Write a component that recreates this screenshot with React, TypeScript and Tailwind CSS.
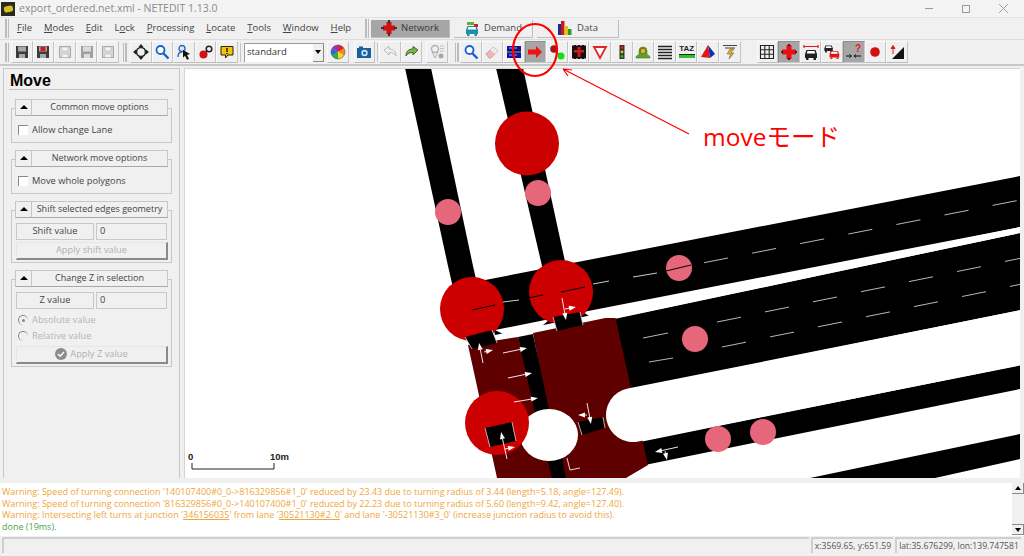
import React from "react";

const ui = "font-['Open_Sans','Noto_Sans',sans-serif]";

const Svg = ({ children }: { children: React.ReactNode }) => (
  <svg viewBox="0 0 16 16" className="w-4 h-4 shrink-0">{children}</svg>
);

const Floppy = ({ body = "#3b3b3b", inner = "#a8a8a8", dot }: { body?: string; inner?: string; dot?: string }) => (
  <Svg>
    <path d="M2 2h12v12H2z" fill={body} />
    <path d="M4 2.500h8v5H4z" fill={inner} />
    <path d="M5 10h6v4H5z" fill={inner} />
    {dot && <path d="M5.500 3h5v4h-5z" fill={dot} />}
  </Svg>
);

const GhostFloppy = () => (
  <Svg>
    <path d="M2.500 2.500h11v11h-11z" fill="#d8d8d8" stroke="#a5a5a5" />
    <path d="M5 3h6v4H5zM5 10h6v3.500H5z" fill="#f4f4f4" stroke="#b5b5b5" strokeWidth="0.6" />
  </Svg>
);

const MoveCross = () => (
  <Svg>
    <circle cx="8" cy="8" r="4.500" fill="none" stroke="#222" strokeWidth="1.600" />
    <path d="M8 0l2.500 3h-5zM8 16l2.500-3h-5zM0 8l3-2.500v5zM16 8l-3-2.500v5z" fill="#222" />
  </Svg>
);

const Search = () => (
  <Svg>
    <circle cx="6.500" cy="6" r="4" fill="#fff" stroke="#1560d4" strokeWidth="1.800" />
    <path d="M9.500 9.500l5 5" stroke="#1560d4" strokeWidth="2.400" />
  </Svg>
);

const LocatePerson = () => (
  <Svg>
    <circle cx="6" cy="4.500" r="3" fill="#dbe7fb" stroke="#2a62c4" strokeWidth="1.300" />
    <path d="M2 13c0-4 2-5 4-5" fill="none" stroke="#2a62c4" strokeWidth="1.400" />
    <path d="M7 6l7 4-3 1 2 4-2 .8-2-4-2 2z" fill="#111" />
  </Svg>
);

const RedLock = () => (
  <Svg>
    <circle cx="5.500" cy="10.500" r="4" fill="#d50f14" />
    <circle cx="11" cy="5" r="2.800" fill="none" stroke="#222" strokeWidth="1.500" />
    <path d="M8 8l1.500-1.500" stroke="#222" strokeWidth="1.500" />
  </Svg>
);

const Bubble = () => (
  <Svg>
    <path d="M2 2.500h12v8.500H9l-2.500 3V11H2z" fill="#f5c400" stroke="#222" />
    <path d="M8 4v4M8 9v1.200" stroke="#222" strokeWidth="1.500" />
  </Svg>
);

const Wheel = () => (
  <Svg>
    <path d="M8 8V1a7 7 0 0 1 6 3.500z" fill="#e3202a" />
    <path d="M8 8l6-3.500A7 7 0 0 1 14 11.500z" fill="#f08a16" />
    <path d="M8 8l6 3.500A7 7 0 0 1 8 15z" fill="#f3dc16" />
    <path d="M8 8v7a7 7 0 0 1-6-3.500z" fill="#2fae3a" />
    <path d="M8 8l-6 3.500A7 7 0 0 1 2 4.500z" fill="#1f68d8" />
    <path d="M8 8L2 4.500A7 7 0 0 1 8 1z" fill="#9a30b8" />
    <circle cx="8" cy="8" r="7" fill="none" stroke="#555" strokeWidth="0.600" />
  </Svg>
);

const Camera = () => (
  <Svg>
    <path d="M1 4h14v10H1z" fill="#17609e" />
    <path d="M3 2.500h4V4H3z" fill="#17609e" />
    <circle cx="8.500" cy="9" r="3.200" fill="#cfe3f5" />
    <circle cx="8.500" cy="9" r="1.600" fill="#17609e" />
  </Svg>
);

const Undo = () => (
  <Svg>
    <path d="M2 6l5-3.500V5c5 0 7 3 7 7-1.500-2.500-3.500-3.500-7-3.500V11z" fill="#f2f2f2" stroke="#b8b8b8" />
  </Svg>
);

const Redo = () => (
  <Svg>
    <path d="M14 6L9 2.500V5c-5 0-7 3-7 7 1.500-2.500 3.500-3.500 7-3.500V11z" fill="#7cb648" stroke="#3e6b24" />
  </Svg>
);

const PinGhost = () => (
  <Svg>
    <circle cx="6" cy="5" r="3.500" fill="none" stroke="#b0b0b0" strokeWidth="1.400" />
    <path d="M3 8l3 6 3-6" fill="none" stroke="#b0b0b0" />
    <circle cx="12" cy="12" r="2.500" fill="#a8a8a8" />
    <path d="M11 2h4M11 4.500h4M11 7h4" stroke="#c0c0c0" />
  </Svg>
);

const Eraser = () => (
  <Svg>
    <path d="M2 10l7-7 5 4-7 7H5z" fill="#f1b5b5" stroke="#c9a6a6" />
    <path d="M9 3l5 4-3 3-5-4z" fill="#ececec" stroke="#c9c9c9" strokeWidth="0.600" />
  </Svg>
);

const Inspect = () => (
  <Svg>
    <path d="M1 2h14v12H1z" fill="#10109a" />
    <path d="M1 6.500h14v1.500H1z" fill="#111" />
    <path d="M3 4h3M8 4h3M3 11h3M8 11h3" stroke="#7fb0ff" />
    <path d="M0 8h16" stroke="#ddd" strokeWidth="0.700" />
  </Svg>
);

const RedArrow = () => (
  <Svg>
    <path d="M1 5.500h8V2l6 6-6 6v-3.500H1z" fill="#f01010" />
  </Svg>
);

const Dots = () => (
  <Svg>
    <circle cx="5" cy="5" r="3.800" fill="#a01818" />
    <path d="M7 7l3 3" stroke="#555" />
    <circle cx="12" cy="12" r="3.500" fill="#15e015" />
  </Svg>
);

const Crossing = () => (
  <Svg>
    <path d="M1 1h14v14H1z" fill="#111" />
    <path d="M6.500 3h3v10h-3zM3 6h10v2.500H3z" fill="#d81818" />
    <path d="M1 1h2M5 1h2M9 1h2M13 1h2M1 15h2M5 15h2M9 15h2M13 15h2" stroke="#eee" />
  </Svg>
);

const Yield = () => (
  <Svg>
    <path d="M2 3h12L8 14z" fill="#fff" stroke="#e0242c" strokeWidth="1.800" />
  </Svg>
);

const TrafficLight = () => (
  <Svg>
    <path d="M5.500 1h5v14h-5z" fill="#333" />
    <circle cx="8" cy="3.500" r="1.400" fill="#e41c1c" />
    <circle cx="8" cy="8" r="1.400" fill="#f0c000" />
    <circle cx="8" cy="12.500" r="1.400" fill="#20c020" />
  </Svg>
);

const Detector = () => (
  <Svg>
    <path d="M1 14c0-2 1-3 3-3V7a4 4 0 0 1 8 0v4c2 0 3 1 3 3z" fill="#5ea32b" stroke="#3d7a1c" strokeWidth="0.600" />
    <circle cx="8" cy="7" r="2.800" fill="#d9b93a" stroke="#7a6a18" />
  </Svg>
);

const Lines = () => (
  <Svg>
    <path d="M1 2.500h14M1 5.500h14M1 8.500h14M1 11.500h14M1 14.500h14" stroke="#222" strokeWidth="1.500" />
  </Svg>
);

const Taz = () => (
  <div className="w-4 h-4 flex flex-col items-center shrink-0">
    <span className="font-['Liberation_Sans',sans-serif] text-[8px] leading-[10px] font-bold text-[#222]">TAZ</span>
    <div className="w-full h-[4px] bg-[#2fc02f] border-t border-[#222]" />
  </div>
);

const Prism = () => (
  <Svg>
    <path d="M8 1L1 13l9 1z" fill="#e01818" />
    <path d="M8 1l2 13 5-4z" fill="#1030a8" />
  </Svg>
);

const Bolt = () => (
  <Svg>
    <path d="M1 1.500h14M3 4h10" stroke="#444" strokeWidth="1.200" />
    <path d="M8 5h4l-3 4h3l-5 6 1.500-5H5z" fill="#e0b010" stroke="#555" strokeWidth="0.500" />
  </Svg>
);

const Grid = () => (
  <Svg>
    <path d="M1.500 1.500h13v13h-13zM1.500 5.800h13M1.500 10.200h13M5.800 1.500v13M10.200 1.500v13" fill="none" stroke="#222" strokeWidth="1.100" />
  </Svg>
);

const RedPlus = () => (
  <Svg>
    <path d="M5.500 1h5v4.500H15v5h-4.500V15h-5v-4.500H1v-5h4.500z" fill="#ea0f14" />
    <path d="M8 0v2M8 14v2M0 8h2M14 8h2" stroke="#111" strokeWidth="1.600" />
  </Svg>
);

const Car = ({ color = "#222", x = 0, y = 0, s = 1 }: { color?: string; x?: number; y?: number; s?: number }) => (
  <g transform={`translate(${x} ${y}) scale(${s})`}>
    <path d="M2 9l1.500-4h9L14 9v4H2z" fill={color} />
    <path d="M4.500 6h7l.8 2.500h-8.600z" fill="#fff" />
    <path d="M3 13h2.500v2H3zM10.500 13H13v2h-2.500z" fill={color} />
  </g>
);

const CarWidth = () => (
  <Svg>
    <path d="M1 2.500h14M1 1v3M15 1v3" stroke="#e01818" strokeWidth="1.200" />
    <Car y={1} />
  </Svg>
);

const TwoCars = () => (
  <Svg>
    <Car x={-1} y={-2} s={0.7} />
    <Car x={4} y={3} s={0.8} color="#e01818" />
  </Svg>
);

const Question = () => (
  <Svg>
    <path d="M0 12h5M3.500 10.500L5.500 12l-2 1.500M8 12h7M10 10.500L8 12l2 1.500" fill="none" stroke="#111" />
    <text x="9" y="8" fontSize="10" fontWeight="700" fill="#e01818" fontFamily="Liberation Sans, sans-serif">?</text>
  </Svg>
);

const RedDot = () => (
  <Svg>
    <circle cx="8" cy="8" r="4.800" fill="#d40f14" />
  </Svg>
);

const Slope = () => (
  <Svg>
    <path d="M15 3v12H3z" fill="#111" />
    <path d="M4 10V3M2 4.500L4 1.500l2 3z" fill="#e01818" stroke="#e01818" />
  </Svg>
);

const Btn = ({ children, on }: { children: React.ReactNode; on?: boolean }) => (
  <div
    className={`w-[21.6px] h-[22px] flex items-center justify-center shrink-0 border-t border-l border-r border-b ${
      on
        ? "bg-[#a6a6a6] border-t-[#909090] border-l-[#909090] border-r-[#c8c8c8] border-b-[#c8c8c8]"
        : "border-t-[#fafafa] border-l-[#fafafa] border-r-[#c4c4c4] border-b-[#bdbdbd]"
    }`}
  >
    {children}
  </div>
);

const Grip = () => (
  <div className="flex gap-[1px] h-[19px] shrink-0">
    <div className="w-[1.500px] bg-[#bcbcbc]" />
    <div className="w-[1.500px] bg-[#bcbcbc]" />
  </div>
);

const Sep = () => <div className="w-[1px] h-[19px] bg-[#c4c4c4] shrink-0" />;

const menus: [string, string, string][] = [
  ["", "F", "ile"],
  ["", "M", "odes"],
  ["", "E", "dit"],
  ["L", "o", "ck"],
  ["", "P", "rocessing"],
  ["", "L", "ocate"],
  ["", "T", "ools"],
  ["", "W", "indow"],
  ["", "H", "elp"],
];

const Tab = ({ children, on, className }: { children: React.ReactNode; on?: boolean; className: string }) => (
  <div
    className={`h-[18px] flex items-center justify-center gap-[4px] text-[9.500px] border-r border-b ${className} ${
      on ? "bg-[#a6a6a6] border-[#bcbcbc] text-[#3a3a3a]" : "border-[#bcbcbc] text-[#4a4a4a]"
    }`}
  >
    {children}
  </div>
);

const Group = ({ title, children, first }: { title: string; children: React.ReactNode; first?: boolean }) => (
  <div className={`mx-[7px] ${first ? "mt-[8.500px]" : "mt-[7px]"}`}>
    <div className="relative z-10 flex h-[17px] mx-[4px]">
      <div className="w-[17px] flex items-center justify-center bg-[#f0f0f0] border border-[#c6c6c6] border-b-[#a8a8a8]">
        <div className="w-0 h-0 border-l-[4px] border-r-[4px] border-b-[4px] border-l-transparent border-r-transparent border-b-black" />
      </div>
      <div className="w-[136px] flex items-center justify-center bg-[#f0f0f0] border border-l-0 border-[#c6c6c6] border-b-[#a8a8a8] text-[#444] text-[9px] whitespace-nowrap">
        {title}
      </div>
    </div>
    <div className="-mt-[8px] border border-[#c8c8c8] pt-[11px] px-[4px] pb-[2px]">{children}</div>
  </div>
);

const Check = ({ label }: { label: string }) => (
  <div className="flex items-center gap-[4px] h-[20px] pl-[2px] text-[9.300px] text-[#444]">
    <div className="w-[10px] h-[10px] bg-white border-t border-l border-[#8a8a8a]" />
    {label}
  </div>
);

const ValueRow = ({ label, value }: { label: string; value: string }) => (
  <div className="flex gap-[2px] h-[17px] text-[9.300px] text-[#444] mt-[1px]">
    <div className="w-[78px] flex items-center justify-center border border-[#c8c8c8]">{label}</div>
    <div className="w-[71px] flex items-center pl-[3px] border border-[#c8c8c8]">{value}</div>
  </div>
);

const Apply = ({ children }: { children: React.ReactNode }) => (
  <div className="w-[152px] h-[18px] mt-[2px] flex items-center justify-center gap-[3px] text-[9.300px] text-[#b0b0b0] border-t border-l border-[#e6e6e6] border-r-2 border-b-2 border-r-[#8a8a8a] border-b-[#8a8a8a]">
    {children}
  </div>
);

const Radio = ({ label, on }: { label: string; on?: boolean }) => (
  <div className="flex items-center gap-[4px] h-[16px] pl-[2px] text-[9.300px] text-[#b4b4b4]">
    <div className="w-[10px] h-[10px] rounded-full border-t border-l border-[#8a8a8a] flex items-center justify-center">
      {on && <div className="w-[3px] h-[3px] rounded-full bg-[#888]" />}
    </div>
    {label}
  </div>
);

const Flow = ({ x1, y1, x2, y2 }: { x1: number; y1: number; x2: number; y2: number }) => {
  const a = Math.atan2(y2 - y1, x2 - x1);
  const l = 7;
  const w = 2.5;
  const bx = x2 - Math.cos(a) * l;
  const by = y2 - Math.sin(a) * l;
  const px = -Math.sin(a) * w;
  const py = Math.cos(a) * w;
  return (
    <g>
      <line x1={x1} y1={y1} x2={bx} y2={by} stroke="#fff" strokeWidth="0.900" />
      <polygon points={`${x2},${y2} ${bx + px},${by + py} ${bx - px},${by - py}`} fill="#fff" />
    </g>
  );
};

const dashes = (x: number, y: number, dx: number, dy: number, n: number) =>
  Array.from({ length: n }, (_, i) => [x + dx * i, y + dy * i] as const);

const laneA = dashes(704, 262.700, 48.100, -9.550, 7);
const laneB1 = dashes(717, 322, 48, -10.100, 7);
const laneB2 = dashes(722, 347, 48, -10.100, 7);

const flows = [
  [483, 363, 479, 343],
  [484, 352, 493, 350],
  [503, 353, 527, 348],
  [508, 378, 532, 373],
  [514, 402, 538, 398],
  [562, 298, 566, 320],
  [565, 309, 576, 307],
  [507, 459, 501, 432],
  [505, 449, 515, 447],
  [587, 403, 591, 424],
  [587, 415, 578, 415],
  [678, 447, 655, 452],
  [665, 451, 667, 460],
];

const stops = [
  "465,337 492,330 497,343 472,349",
  "553,317 580,312 583,325 557,331",
  "485,428 512,422 516,441 490,447",
  "578,422 603,417 605,428 582,435",
];

const Net = () => (
  <svg viewBox="185 69 835 409" className="absolute inset-0 w-full h-full">
    <polygon points="405,68 431,68 473,266 490,340 465,340 448,266" fill="#000" />
    <polygon points="496,68 523,68 566,266 578,320 553,320 542,266" fill="#000" />
    <polygon points="1020,176 480,281 495,335 1020,227" fill="#000" />
    <polygon points="600,322 1020,233 1020,310 612,393" fill="#000" />
    <polygon points="625,445 1020,365 1020,389 630,468" fill="#000" />
    <polygon points="810,478 1020,434 1020,459 935,478" fill="#000" />
    <polygon points="468,345 518,337 555,478 497,478" fill="#5e0000" />
    <polygon points="533,333 615,316 648,465 626,478 560,478" fill="#5e0000" />
    <polygon points="518,337 533,334 549,410 535,413" fill="#000" />
    <polygon points="546,455 561,452 566,478 552,478" fill="#000" />
    <line x1="633" y1="415" x2="1060" y2="330" stroke="#fff" strokeWidth="54" strokeLinecap="round" />
    <polygon points="1020,227 1020,233 617,318 600,318 589,316 583,312" fill="#fff" />
    <path d="M495 330L550 319Q530 338 512 336Q503 335 495 330Z" fill="#fff" />
    <ellipse cx="549" cy="435" rx="29" ry="26" fill="#fff" />
    <circle cx="527" cy="143.500" r="32" fill="#cc0000" />
    <circle cx="472" cy="309" r="32" fill="#cc0000" />
    <circle cx="561" cy="292" r="32" fill="#cc0000" />
    <circle cx="497" cy="423" r="32" fill="#cc0000" />
    {stops.map((p) => (
      <polygon key={p} points={p} fill="#000" />
    ))}
    <path d="M465 337L472 349M492 330L497 343M553 317L557 331M580 312L583 325M485 428L490 447M512 422L516 441M578 422L582 435M603 417L605 428" stroke="#d8d8d8" strokeWidth="0.800" />
    {[[448, 212], [538, 193], [679, 268], [695, 339], [718, 439], [763, 432]].map(([cx, cy]) => (
      <circle key={cx} cx={cx} cy={cy} r="13" fill="#e6677a" />
    ))}
    <path d="M472 310L495 305M528 298L543 295M561 292L585 287M666 271L691 265" stroke="#000" strokeWidth="1" />
    <path d="M503 302L519 300M593 284L609 281M633 277L657 273" stroke="#ccc" strokeWidth="1" />
    {laneA.map(([x, y]) => (
      <line key={x} x1={x} y1={y} x2={x + 24} y2={y - 4.700} stroke="#ccc" strokeWidth="0.900" />
    ))}
    <path d="M643 338L668 333M649 362L673 358" stroke="#ccc" strokeWidth="0.900" />
    {laneB1.map(([x, y]) => (
      <line key={x} x1={x} y1={y} x2={x + 24} y2={y - 4.800} stroke="#ccc" strokeWidth="0.900" />
    ))}
    {laneB2.map(([x, y]) => (
      <line key={x} x1={x} y1={y} x2={x + 24} y2={y - 4.800} stroke="#ccc" strokeWidth="0.900" />
    ))}
    {flows.map(([x1, y1, x2, y2]) => (
      <Flow key={`${x1}-${y1}`} x1={x1} y1={y1} x2={x2} y2={y2} />
    ))}
    <path d="M567 458L570 470L580 468" fill="none" stroke="#eee" strokeWidth="0.900" />
    <path d="M192 463V469H274V463" fill="none" stroke="#222" strokeWidth="1" />
    <text x="188" y="460" fontSize="9.500" fontWeight="700" fill="#222" fontFamily="Liberation Sans, sans-serif">0</text>
    <text x="270" y="460" fontSize="9.500" fontWeight="700" fill="#222" fontFamily="Liberation Sans, sans-serif">10m</text>
  </svg>
);

export default function App() {
  return (
    <div className={`relative w-[1024px] h-[556px] overflow-hidden flex flex-col bg-[#f0f0f0] ${ui}`}>
      {/* title bar */}
      <div className="h-[18px] flex items-center bg-[#f3f3f3] border-b border-[#e2e2e2] shrink-0">
        <div className="w-[14px] h-[14px] ml-[1px] bg-[#2a2a20] flex items-center justify-center">
          <div className="w-[9px] h-[6px] rounded-[2px] bg-[#d8c020] -rotate-12" />
        </div>
        <span className="ml-[4px] text-[10.500px] text-[#8a8a8a]">export_ordered.net.xml - NETEDIT 1.13.0</span>
        <div className="ml-auto flex items-center">
          <div className="w-[8px] h-[1px] bg-[#9a9a9a] mr-[29px]" />
          <div className="w-[8px] h-[8px] border border-[#9a9a9a] mr-[29px]" />
          <svg viewBox="0 0 10 10" className="w-[9px] h-[9px] mr-[16px]">
            <path d="M0 0l10 10M10 0L0 10" stroke="#9a9a9a" strokeWidth="1" />
          </svg>
        </div>
      </div>
      {/* menu bar + supermode tabs */}
      <div className="h-[22px] flex items-center pl-[5px] shrink-0 border-b border-[#dcdcdc]">
        <Grip />
        <div className="flex ml-[8px] w-[348px] gap-[11.900px] text-[9.500px] text-[#444] whitespace-nowrap">
          {menus.map(([a, u, b]) => (
            <span key={a + u + b}>
              {a}
              <span className="underline">{u}</span>
              {b}
            </span>
          ))}
        </div>
        <Grip />
        <div className="flex ml-[2px] gap-[4px]">
          <Tab on className="w-[79px]">
            <Svg>
              <path d="M5.500 2h5v3.500H14v5h-3.500V14h-5v-3.500H2v-5h3.500z" fill="#d40f14" />
              <path d="M8 0v2.500M8 13.500V16M0 8h2.500M13.500 8H16" stroke="#111" strokeWidth="1.500" />
            </Svg>
            Network
          </Tab>
          <Tab className="w-[79px]">
            <Svg>
              <Car color="#1f8fa8" y={1} />
              <path d="M3 2h7v3H3z" fill="#5cb030" />
              <path d="M10 4h4v3h-4z" fill="#d02020" />
            </Svg>
            Demand
          </Tab>
          <Tab className="w-[82px]">
            <Svg>
              <path d="M1 4h3v11H1z" fill="#1a2aa0" />
              <path d="M4 1h3.500v14H4z" fill="#d01818" />
              <path d="M7.500 6H11v9H7.500z" fill="#e8c010" />
              <path d="M11 9h3.500v6H11z" fill="#2a9a2a" />
            </Svg>
            Data
          </Tab>
        </div>
      </div>
      {/* toolbar */}
      <div className="h-[24px] flex items-center pl-[5px] shrink-0">
        <Grip />
        <div className="flex ml-[2px]">
          <Btn><Floppy /></Btn>
          <Btn><Floppy dot="#d81818" /></Btn>
          <Btn><GhostFloppy /></Btn>
          <Btn><Floppy body="#a0a0a0" inner="#dcdcdc" /></Btn>
          <Btn><GhostFloppy /></Btn>
        </div>
        <div className="ml-[4px]"><Grip /></div>
        <div className="flex ml-[3px]">
          <Btn><MoveCross /></Btn>
          <Btn><Search /></Btn>
          <Btn><LocatePerson /></Btn>
          <Btn><RedLock /></Btn>
          <Btn><Bubble /></Btn>
        </div>
        <div className="ml-[2px]"><Sep /></div>
        <div className="ml-[3px] w-[80px] h-[19px] bg-white border-t border-l border-[#9a9a9a] flex items-center pl-[2px] text-[9.500px] text-[#333]">
          standard
          <div className="ml-auto w-[11px] h-full flex items-center justify-center bg-[#f0f0f0] border-r border-b border-[#888]">
            <div className="w-0 h-0 border-l-[3px] border-r-[3px] border-t-[4px] border-l-transparent border-r-transparent border-t-black" />
          </div>
        </div>
        <div className="flex ml-[3px]">
          <Btn><Wheel /></Btn>
          <div className="w-[5px]" />
          <Btn><Camera /></Btn>
        </div>
        <div className="ml-[2px]"><Sep /></div>
        <div className="flex ml-[1px]">
          <Btn><Undo /></Btn>
          <Btn><Redo /></Btn>
          <div className="w-[4px]" />
          <Btn><PinGhost /></Btn>
        </div>
        <div className="ml-[7px]"><Grip /></div>
        <div className="flex ml-[1px]">
          <Btn><Search /></Btn>
          <Btn><Eraser /></Btn>
          <Btn><Inspect /></Btn>
          <Btn on><RedArrow /></Btn>
          <Btn><Dots /></Btn>
          <Btn><Crossing /></Btn>
          <Btn><Yield /></Btn>
          <Btn><TrafficLight /></Btn>
          <Btn><Detector /></Btn>
          <Btn><Lines /></Btn>
          <Btn><Taz /></Btn>
          <Btn><Prism /></Btn>
          <Btn><Bolt /></Btn>
        </div>
        <div className="flex ml-[16px]">
          <Btn><Grid /></Btn>
          <Btn on><RedPlus /></Btn>
          <Btn><CarWidth /></Btn>
          <Btn><TwoCars /></Btn>
          <Btn on><Question /></Btn>
          <Btn><RedDot /></Btn>
          <Btn><Slope /></Btn>
        </div>
      </div>
      <div className="h-[2px] bg-[#c8c8c8] shrink-0" />
      {/* main area */}
      <div className="h-[412px] flex pt-[2px] pl-[3px] pr-[4px] shrink-0">
        <div className="w-[177px] h-full border-l border-r border-t border-[#c8c8c8]">
          <div className="mx-[5px] mt-[3px] mb-[2px] pl-[1px] h-[18px] border-b border-[#c4c4c4] font-['Liberation_Sans',sans-serif] text-[16px] leading-[17px] font-bold text-black">
            Move
          </div>
          <Group first title="Common move options">
            <Check label="Allow change Lane" />
          </Group>
          <Group title="Network move options">
            <Check label="Move whole polygons" />
          </Group>
          <Group title="Shift selected edges geometry">
            <ValueRow label="Shift value" value="0" />
            <Apply>Apply shift value</Apply>
          </Group>
          <Group title="Change Z in selection">
            <ValueRow label="Z value" value="0" />
            <div className="h-[3px]" />
            <Radio label="Absolute value" on />
            <Radio label="Relative value" />
            <Apply>
              <svg viewBox="0 0 12 12" className="w-[12px] h-[12px]">
                <circle cx="6" cy="6" r="6" fill="#8c8c8c" />
                <path d="M3 6l2.200 2.200L9 4" fill="none" stroke="#fff" strokeWidth="1.400" />
              </svg>
              Apply Z value
            </Apply>
          </Group>
        </div>
        <div className="relative ml-[4px] flex-1 bg-white border-l border-t border-[#d4d4d4]">
          <Net />
        </div>
      </div>
      {/* messages */}
      <div className="h-[53px] mt-[5px] flex shrink-0 bg-white">
        <div className="flex-1 pl-[2px] pt-[3px] text-[9px] leading-[11.700px] text-[#f0a63c] whitespace-nowrap">
          <div>Warning: Speed of turning connection '140107400#0_0-&gt;816329856#1_0' reduced by 23.43 due to turning radius of 3.44 (length=5.18, angle=127.49).</div>
          <div>Warning: Speed of turning connection '816329856#0_0-&gt;140107400#1_0' reduced by 22.23 due to turning radius of 5.60 (length=9.42, angle=127.40).</div>
          <div>
            Warning: Intersecting left turns at junction '<span className="underline">346156035</span>' from lane '<span className="underline">30521130#2_0</span>' and lane '-30521130#3_0' (increase junction radius to avoid this).
          </div>
          <div className="text-[#4fa34f]">done (19ms).</div>
        </div>
        <div className="w-[12px] h-[52px] flex flex-col justify-between bg-[#f0f0f0]">
          <div className="h-[11px] flex items-center justify-center border-r border-b border-[#8a8a8a]">
            <div className="w-0 h-0 border-l-[3px] border-r-[3px] border-b-[4px] border-l-transparent border-r-transparent border-b-black" />
          </div>
          <div className="h-[11px] flex items-center justify-center border-r border-b border-t border-[#8a8a8a]">
            <div className="w-0 h-0 border-l-[3px] border-r-[3px] border-t-[4px] border-l-transparent border-r-transparent border-t-black" />
          </div>
        </div>
      </div>
      {/* status bar */}
      <div className="h-[20px] shrink-0 flex gap-[2px] pl-[2px] pr-[3px] pt-[1px] pb-[3px] bg-[#f0f0f0] text-[8.600px] text-[#555] whitespace-nowrap">
        <div className="w-[807px] border-t-2 border-l-2 border-[#cfcfcf]" />
        <div className="w-[82px] flex items-center justify-center border-t-2 border-l-2 border-[#cfcfcf]">x:3569.65, y:651.59</div>
        <div className="flex-1 flex items-center justify-center border-t-2 border-l-2 border-[#cfcfcf]">lat:35.676299, lon:139.747581</div>
      </div>
      {/* hand-drawn annotation on top of the screenshot */}
      <svg viewBox="0 0 1024 556" className="absolute inset-0 w-[1024px] h-[556px] pointer-events-none">
        <ellipse cx="535" cy="50" rx="22" ry="26" fill="none" stroke="#ff0000" strokeWidth="2.200" />
        <path d="M689 134L563 69M563 69L572 70M563 69L568 76" fill="none" stroke="#ff0000" strokeWidth="1.200" />
      </svg>
      <div className="absolute left-[703px] top-[122px] font-['Open_Sans','Noto_Sans_CJK_JP',sans-serif] text-[24.500px] leading-[30px] text-[#ff0000]">
        moveモード
      </div>
    </div>
  );
}
